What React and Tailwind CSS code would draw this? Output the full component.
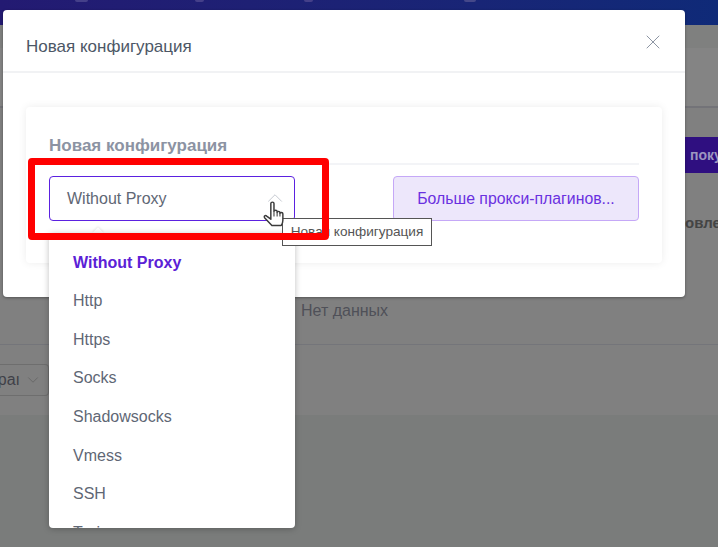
import { useState } from "react";
import { ChevronDown, ChevronUp, X } from "lucide-react";

const proxyTypes = ["Http", "Https", "Socks", "Shadowsocks", "Vmess", "SSH", "Trojan"];

const HandCursor = () => (
  <svg width="23" height="29" viewBox="0 0 22 27" className="absolute left-[263px] top-[200px]">
    <path
      d="M7.5 3c0-1.8 3-1.8 3 0v7.5c0-1.4 3-1.4 3 0v1c0-1.3 2.7-1.3 2.7 0v1c0-1.2 2.8-1.2 2.8.2v6.3c0 2-.6 3.5-1.5 5H8.5L1.5 16.5c-1-1.3.8-2.7 2-1.5l4 3Z"
      fill="#fff"
      stroke="#3a3a3a"
      strokeWidth="1.4"
      strokeLinejoin="round"
    />
    <path d="M10.5 10.5v5M13.5 11.5v4M16.2 12.5v3" stroke="#3a3a3a" strokeWidth="1" />
  </svg>
);

const App = () => {
  const [selected] = useState("Without Proxy");

  return (
    <div className="relative h-[547px] w-[718px] overflow-hidden bg-[#7a7c7b] font-['Liberation_Sans',sans-serif]">
      {/* dimmed page behind the modal */}
      <div className="flex h-[25px] bg-gradient-to-r from-[#231a72] to-[#0f2a78] pl-[75px]">
        <div className="h-[2px] w-[13px] rounded-b bg-[#45408a]"></div>
        <div className="ml-[107px] h-[2px] w-[9px] rounded-b bg-[#45408a]"></div>
        <div className="ml-[100px] h-[2px] w-[9px] rounded-b bg-[#45408a]"></div>
        <div className="ml-[151px] h-[2px] w-[12px] rounded-b bg-[#45488a]"></div>
      </div>
      <div className="h-[23px] bg-[#7f807f]"></div>
      <div className="h-[60px] border-b-2 border-[#737378] bg-[#848484]"></div>
      <div className="relative h-[237px] border-b border-[#74757a] bg-[#808080]">
        <div className="absolute right-0 top-[29px] flex h-9 w-[33px] items-center overflow-hidden bg-[#2f0f80] pl-[5px] text-sm font-bold text-[#9d95c0]">
          поку
        </div>
        <div className="absolute left-[685px] top-[104px] text-[15px] font-bold text-[#444]">овле</div>
        <div className="absolute left-[301px] top-[191px] text-base text-[#4f5058]">Нет данных</div>
      </div>
      <div className="flex h-[70px] items-start bg-[#808080] pt-[19px]">
        <div className="flex h-[32px] w-[49px] items-center justify-end gap-1 overflow-hidden rounded-r border border-l-0 border-[#6e6e6e] pr-1.5 text-base text-[#3f4048]">
          <span>раı</span>
          <ChevronDown size={18} strokeWidth={1} className="shrink-0 text-[#606060]" />
        </div>
      </div>

      {/* modal */}
      <div className="absolute left-[3px] top-[10px] h-[287px] w-[682px] rounded bg-white shadow-[0_1px_3px_rgba(0,0,0,0.35)]">
        <div className="flex h-[63px] items-start justify-between border-b-2 border-[#f1f2f4] pl-[23px] pr-[20px]">
          <span className="pt-[27px] text-[17px] leading-5 text-[#4d5766]">Новая конфигурация</span>
          <X size={24} strokeWidth={1} className="mt-5 text-[#8d95a3]" />
        </div>
        <div className="px-[23px] pt-[34px]">
          <div className="h-[156px] rounded bg-white px-[23px] pt-[22px] shadow-[0_0_8px_rgba(0,0,0,0.08)]">
            <div className="h-9 border-b-2 border-[#f3f4f7] text-[17px] leading-[34px] font-bold text-[#8c93a3]">
              Новая конфигурация
            </div>
            <div className="mt-[11px] flex justify-between">
              <div className="flex h-[45px] w-[246px] items-center justify-between rounded border border-[#5b21e0] pl-[17px] pr-[6px] text-base text-[#5f6775]">
                <span>{selected}</span>
                <ChevronUp size={26} strokeWidth={0.9} className="mb-[2px] text-[#c4c8d0]" />
              </div>
              <button className="h-[45px] w-[246px] rounded border border-[#c5a8f7] bg-[#ede7fb] text-[15.8px] text-[#6a30e0]">
                Больше прокси-плагинов...
              </button>
            </div>
          </div>
        </div>
      </div>

      {/* dropdown list */}
      <div className="absolute left-[94px] top-[229px] size-2 rotate-45 bg-white shadow-[-1px_-1px_2px_rgba(0,0,0,0.08)]"></div>
      <div className="absolute left-[49px] top-[233px] h-[295px] w-[246px] overflow-hidden rounded bg-white pt-[10px] shadow-[0_1px_6px_rgba(0,0,0,0.25)]">
        <div className="flex h-[39px] items-center pl-6 text-base font-bold text-[#5b21d6]">{selected}</div>
        {proxyTypes.map((type) => (
          <div key={type} className="flex h-[38.6px] items-center pl-6 text-base text-[#5f6775]">
            {type}
          </div>
        ))}
      </div>

      {/* tooltip and hand, the red frame goes over the tooltip */}
      <div className="absolute left-[282px] top-[218px] flex h-[28px] w-[150px] items-center justify-center border border-[#555] bg-white text-[13.6px] text-[#555]">
        Новая конфигурация
      </div>
      <div className="absolute left-[28px] top-[158px] h-[82px] w-[301px] rounded-sm border-[7px] border-[#ff0000]"></div>
      <HandCursor />
    </div>
  );
};

export default App;
